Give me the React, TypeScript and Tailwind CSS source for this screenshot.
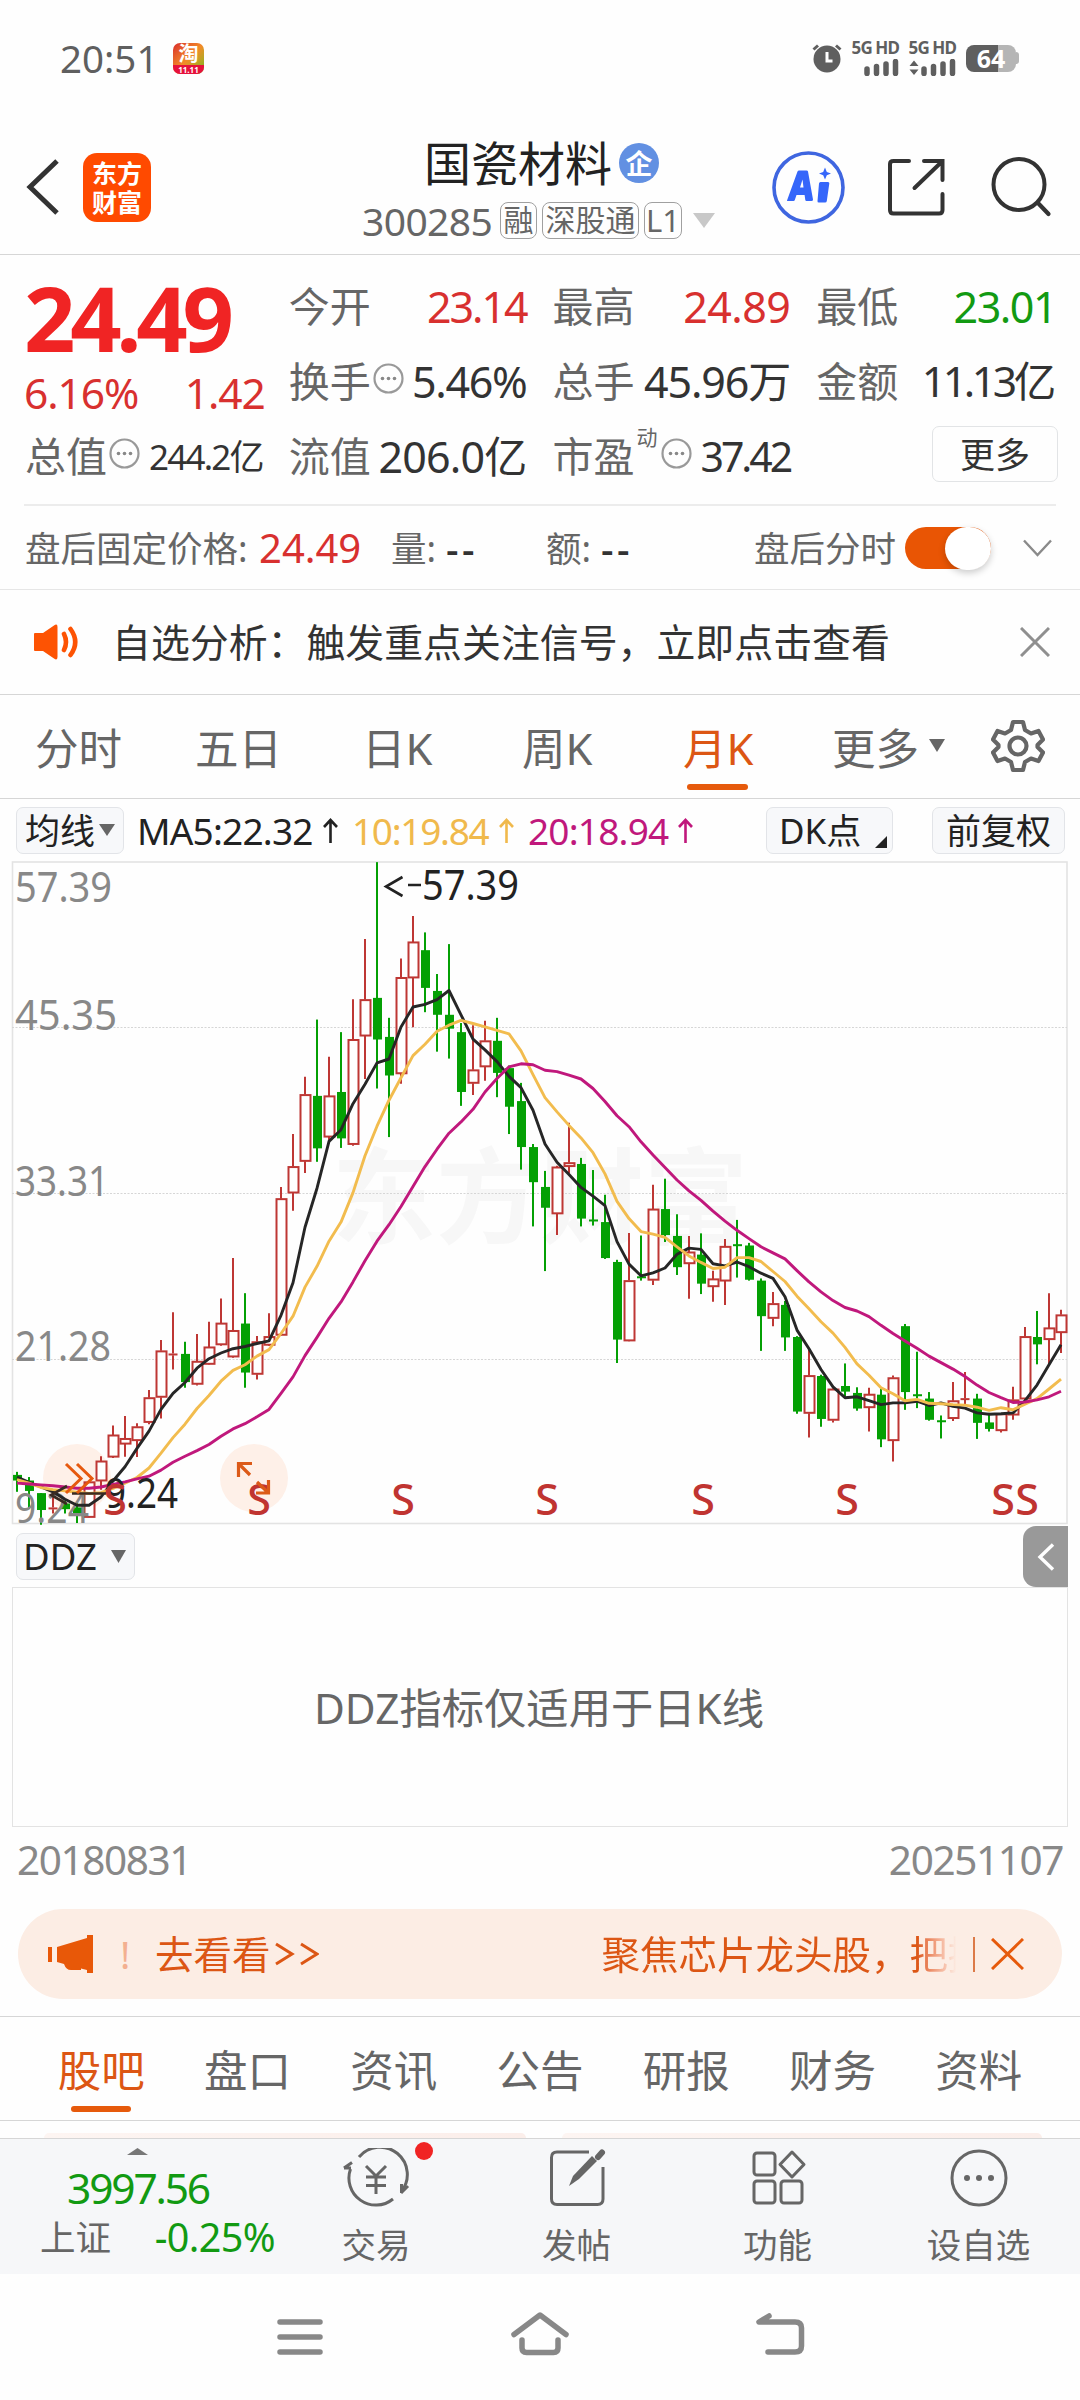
import React from "react";

const FONT = "font-['Noto_Sans','Noto_Sans_CJK_SC',sans-serif]";

type Candle = ["r" | "g", number, number, number, number];

// [direction, high, body top, body bottom, low] in plot units, top to bottom
const CANDLES: Candle[] = [
  ["g", 1434, 1441, 1454, 1480], ["g", 1446, 1454, 1478, 1520], ["g", 1483, 1483, 1522, 1556], ["r", 1490, 1516, 1520, 1530],
  ["g", 1500, 1507, 1520, 1530], ["g", 1505, 1516, 1535, 1552], ["r", 1455, 1457, 1539, 1540], ["r", 1398, 1409, 1455, 1475],
  ["r", 1327, 1349, 1400, 1402], ["r", 1305, 1357, 1370, 1399], ["r", 1322, 1330, 1362, 1400], ["r", 1245, 1263, 1320, 1324],
  ["r", 1130, 1155, 1262, 1311], ["r", 1066, 1161, 1165, 1198], ["g", 1134, 1162, 1227, 1240], ["r", 1116, 1179, 1232, 1235],
  ["r", 1088, 1146, 1186, 1187], ["r", 1034, 1091, 1141, 1143], ["r", 941, 1108, 1169, 1171], ["g", 1022, 1092, 1205, 1240],
  ["r", 1121, 1134, 1209, 1221], ["r", 1068, 1122, 1142, 1144], ["r", 777, 804, 1119, 1120], ["r", 655, 730, 791, 832],
  ["r", 523, 564, 718, 745], ["g", 391, 567, 688, 719], ["r", 477, 567, 662, 670], ["g", 420, 558, 665, 687],
  ["r", 344, 437, 679, 682], ["r", 205, 345, 429, 528], ["g", 28, 341, 437, 550], ["g", 387, 431, 520, 662],
  ["r", 250, 294, 516, 539], ["r", 152, 212, 295, 409], ["g", 190, 231, 318, 374], ["g", 286, 325, 380, 465],
  ["g", 217, 380, 412, 481], ["g", 399, 420, 558, 590], ["r", 404, 507, 538, 565], ["r", 394, 440, 500, 532],
  ["g", 387, 440, 514, 570], ["g", 497, 503, 592, 655], ["g", 537, 579, 685, 737], ["g", 678, 685, 766, 868],
  ["g", 740, 777, 825, 971], ["r", 728, 731, 839, 888], ["r", 629, 721, 730, 745], ["g", 710, 724, 850, 868],
  ["g", 738, 852, 855, 866], ["g", 795, 858, 941, 943], ["g", 945, 950, 1129, 1183], ["r", 883, 993, 1132, 1133],
  ["g", 889, 983, 986, 993], ["r", 772, 828, 992, 1003], ["g", 758, 828, 888, 904], ["g", 840, 890, 962, 980],
  ["r", 890, 927, 954, 1035], ["g", 884, 933, 1000, 1024], ["r", 970, 989, 1007, 1042], ["r", 897, 914, 994, 1049],
  ["g", 853, 909, 913, 986], ["g", 906, 912, 991, 993], ["g", 988, 993, 1075, 1155], ["r", 1019, 1046, 1080, 1098],
  ["g", 1040, 1049, 1124, 1155], ["g", 1121, 1123, 1295, 1300], ["r", 1150, 1212, 1299, 1355], ["g", 1210, 1213, 1312, 1330],
  ["r", 1241, 1243, 1315, 1320], ["g", 1184, 1236, 1249, 1260], ["g", 1239, 1252, 1288, 1293], ["r", 1240, 1255, 1286, 1341],
  ["g", 1243, 1256, 1359, 1377], ["r", 1212, 1217, 1362, 1410], ["g", 1093, 1098, 1250, 1291], ["g", 1157, 1255, 1259, 1287],
  ["g", 1250, 1265, 1314, 1316], ["g", 1304, 1315, 1319, 1357], ["r", 1227, 1270, 1311, 1317], ["r", 1204, 1264, 1268, 1280],
  ["g", 1254, 1265, 1321, 1358], ["g", 1298, 1320, 1335, 1341], ["r", 1298, 1300, 1339, 1343], ["r", 1238, 1268, 1303, 1314],
  ["r", 1100, 1122, 1266, 1270], ["g", 1063, 1123, 1140, 1186], ["r", 1022, 1102, 1129, 1185], ["r", 1060, 1072, 1113, 1160],
];

const MA5 = [
  1446, 1458, 1469, 1480, 1497, 1511, 1511, 1492, 1455, 1422, 1380, 1340, 1290, 1253, 1228, 1195, 1173, 1160, 1150, 1145, 1138, 1132,
  1073, 998, 870, 780, 672, 645, 585, 540, 491, 482, 408, 362, 356, 345, 324, 380, 436, 461, 488, 522, 548, 600, 678, 720, 748, 778,
  798, 820, 903, 955, 982, 975, 964, 932, 918, 921, 954, 959, 950, 961, 976, 988, 1030, 1107, 1150, 1198, 1238, 1263, 1261, 1270,
  1279, 1275, 1275, 1271, 1281, 1275, 1283, 1287, 1298, 1301, 1300, 1298, 1270, 1234, 1187, 1141,
];
const MA10 = [
  1452, 1460, 1470, 1475, 1478, 1481, 1484, 1482, 1472, 1460, 1447, 1425, 1391, 1355, 1324, 1288, 1258, 1225, 1200, 1187, 1167, 1152,
  1115, 1075, 1008, 960, 902, 858, 790, 705, 637, 577, 525, 474, 448, 418, 404, 393, 400, 408, 416, 424, 463, 518, 571, 604, 635, 664,
  698, 747, 810, 850, 880, 886, 893, 915, 936, 951, 965, 962, 940, 940, 949, 972, 995, 1029, 1058, 1088, 1114, 1147, 1185, 1211, 1240,
  1254, 1270, 1267, 1276, 1277, 1279, 1280, 1285, 1292, 1286, 1291, 1278, 1265, 1243, 1220,
];
const MA20 = [
  1460, 1462, 1464, 1466, 1469, 1472, 1472, 1469, 1463, 1457, 1450, 1444, 1430, 1412, 1398, 1385, 1371, 1352, 1335, 1323, 1307, 1290,
  1253, 1215, 1166, 1124, 1080, 1042, 996, 947, 902, 864, 822, 776, 730, 690, 653, 627, 598, 558, 527, 500, 493, 495, 508, 511, 519,
  528, 550, 580, 613, 638, 673, 703, 732, 761, 786, 808, 833, 856, 877, 896, 915, 929, 943, 970, 996, 1019, 1039, 1055, 1063, 1076,
  1096, 1115, 1132, 1149, 1167, 1182, 1197, 1214, 1234, 1251, 1263, 1274, 1273, 1268, 1261, 1248,
];

const cx = (i: number) => 17 + i * 12;
const cy = (v: number) => 850 + v / 2.306;
const points = (s: number[]) => s.map((v, i) => `${cx(i)},${cy(v).toFixed(1)}`).join(" ");

function Stick({ c, i }: { c: Candle; i: number }) {
  const [dir, hi, top, bot, lo] = c;
  const x = cx(i);
  const h = cy(bot) - cy(top);
  if (dir === "g") {
    return (
      <g fill="#04a004">
        <rect x={x - 1} y={cy(hi)} width={2} height={cy(lo) - cy(hi)} />
        <rect x={x - 4} y={cy(top)} width={9} height={Math.max(h, 2)} />
      </g>
    );
  }
  return (
    <g fill="none" stroke="#be3734" strokeWidth={2}>
      <path d={`M${x} ${cy(hi)}V${cy(top)}M${x} ${cy(bot)}V${cy(lo)}`} />
      {h < 3 ? <path d={`M${x - 4.5} ${cy(top) + 1}h9`} /> : <rect x={x - 4.5} y={cy(top) + 0.5} width={10} height={h - 1} fill="#fff" />}
    </g>
  );
}

const AXIS: [string, number, number][] = [["57.39", 902, 97], ["45.35", 1030, 102], ["33.31", 1196, 94], ["21.28", 1361, 96], ["9.24", 1523, 74]];
const SELLS = [115, 259, 403, 547, 703, 847, 1003, 1027];

function KChart() {
  return (
    <svg className="block ml-[12px] w-[1056px] h-[663px] overflow-visible" viewBox="12 861 1056 663" fontFamily="Noto Sans, Noto Sans CJK SC, sans-serif">
      <text x="332" y="1236" fontSize="104" fontWeight="700" fill="#f7f7f7">东方财富</text>
      <rect x="12.5" y="862" width="1054.5" height="661.5" fill="none" stroke="#e3e3e3" strokeWidth="1.6" />
      <path d="M12 1027.5H1067M12 1193.5H1067M12 1359.5H1067" stroke="#d6d6d6" strokeWidth="1" strokeDasharray="2 1.5" />
      <circle cx="77" cy="1478" r="34" fill="#fef0e8" />
      <circle cx="254" cy="1478" r="34" fill="#fef0e8" />
      {CANDLES.map((c, i) => <Stick key={i} c={c} i={i} />)}
      {AXIS.map(([t, y, w]) => (
        <text key={t} x="15" y={y} fontSize="41" fill="#888" textLength={w} lengthAdjust="spacingAndGlyphs">{t}</text>
      ))}
      <polyline points={points(MA5)} fill="none" stroke="#262626" strokeWidth="2.9" strokeLinejoin="round" />
      <polyline points={points(MA10)} fill="none" stroke="#f2bc4e" strokeWidth="2.9" strokeLinejoin="round" />
      <polyline points={points(MA20)} fill="none" stroke="#c0187c" strokeWidth="2.9" strokeLinejoin="round" />
      <text x="422" y="899.5" fontSize="41" fill="#222" textLength="97" lengthAdjust="spacingAndGlyphs">57.39</text>
      <path d="M402.500 877L386 886.500L402.500 896M408 885H421" fill="none" stroke="#222" strokeWidth="2.6" />
      <text x="105" y="1508" fontSize="41" fill="#222" textLength="73" lengthAdjust="spacingAndGlyphs">9.24</text>
      <path d="M67 1486L51 1495L67 1504M72 1493.500H106" fill="none" stroke="#3a2a22" strokeWidth="2.6" />
      {SELLS.map((x) => (
        <text key={x} x={x} y="1515" fontSize="43" fontWeight="500" fill="#c03431" textAnchor="middle">S</text>
      ))}
      <path d="M66 1464L81 1478.500L66 1493M77 1464L92 1478.500L77 1493" fill="none" stroke="#e6590e" strokeWidth="3" />
      <path d="M238.500 1477V1463.500H252M239 1464L250 1475M268.500 1480V1493H256M268 1492.500L257 1482" fill="none" stroke="#dc5a18" strokeWidth="3.200" />
    </svg>
  );
}

function Dots() {
  return (
    <svg className="w-[31px] h-[31px] shrink-0" viewBox="0 0 31 31">
      <circle cx="15.500" cy="15.500" r="14" fill="none" stroke="#999" strokeWidth="2.200" />
      <circle cx="9.500" cy="15.500" r="1.800" fill="#888" /><circle cx="15.500" cy="15.500" r="1.800" fill="#888" /><circle cx="21.500" cy="15.500" r="1.800" fill="#888" />
    </svg>
  );
}

function Down({ className }: { className: string }) {
  return (
    <svg className={className} viewBox="0 0 10 10" preserveAspectRatio="none"><path d="M0 0H10L5 10Z" fill="currentColor" /></svg>
  );
}

function Cell({ label, extra, value, cls }: { label: string; extra?: React.ReactNode; value: string; cls: string }) {
  return (
    <div className="flex h-[75px] items-center whitespace-nowrap">
      <span className="text-[41px] text-[#666] -ml-px">{label}</span>
      {extra}
      <span className={`ml-auto ${cls}`}>{value}</span>
    </div>
  );
}

function StatusBar() {
  return (
    <div className="flex h-[116px] items-center pl-[60px] pr-[60px] text-[#5f5f5f]">
      <span className="w-[113px] text-[38.500px]">20:51</span>
      <div className="flex h-[31px] w-[31px] flex-col overflow-hidden rounded-[7px] bg-gradient-to-br from-[#d8232a] via-[#f28a28] to-[#54b81e]">
        <span className="h-[22px] text-center text-[20px] font-bold leading-[22px] text-white">淘</span>
        <span className="h-[9px] bg-[#e6123c] text-center text-[8px] font-bold leading-[9px] text-white">11.11</span>
      </div>
      <svg className="ml-auto h-[30px] w-[30px]" viewBox="0 0 30 30">
        <circle cx="15" cy="16" r="13.500" fill="#5f5f5f" />
        <path d="M1.500 6.500L6 2.500M28.500 6.500L24 2.500" stroke="#5f5f5f" strokeWidth="3" />
        <path d="M15 9V18H20.500" stroke="#fff" strokeWidth="3" fill="none" />
      </svg>
      {[0, 1].map((k) => (
        <div key={k} className="ml-[8px] flex h-[36px] w-[49px] flex-col items-end justify-between">
          <span className="text-[17px] font-bold leading-[15px] tracking-[-0.9px] whitespace-nowrap">5G HD</span>
          <svg className="h-[17px] w-[47px]" viewBox="0 0 47 17">
            {k === 1 && <path d="M0.500 7L5 1.500L9.500 7ZM0.500 10.500L5 16L9.500 10.500Z" fill="#5f5f5f" />}
            <path d="M15 10V14.500M24.500 7.500V14.500M34 5V14.500M43.500 2.500V14.500" stroke="#5f5f5f" strokeWidth="5.500" strokeLinecap="round" />
          </svg>
        </div>
      ))}
      <div className="ml-[10px] flex h-[27px] w-[54px] items-center">
        <div className="flex h-[27px] w-[50px] items-center justify-center rounded-[8px] bg-linear-to-r from-[#5f5f5f] from-64% to-[#b5b5b5] to-64% text-[25px] font-bold text-white">64</div>
        <div className="h-[12px] w-[3px] rounded-r-[3px] bg-[#b5b5b5]" />
      </div>
    </div>
  );
}

function Header() {
  return (
    <div className="flex h-[139px] items-start border-b-[1.5px] border-[#d6d6d6]">
      <svg className="ml-[26px] mt-[43px] h-[56px] w-[34px]" viewBox="0 0 34 56"><path d="M31 2L4 28L31 54" fill="none" stroke="#333" strokeWidth="5" /></svg>
      <div className="ml-[23px] mt-[37px] flex h-[69px] w-[68px] flex-col items-center justify-center rounded-[14px] bg-[#ff4a00] text-[25px] font-bold leading-[29px] text-white">
        <span>东方</span>
        <span>财富</span>
      </div>
      <div className="ml-[212px] flex w-[354px] flex-col">
        <div className="flex h-[70px] items-end pl-[61px]">
          <span className="text-[47px] leading-[46px] text-[#222]">国瓷材料</span>
          <span className="mb-[3px] ml-[7px] flex h-[40px] w-[40px] items-center justify-center rounded-full bg-[#6290e2] text-[27px] font-bold text-white">企</span>
        </div>
        <div className="-ml-px mt-[15px] flex h-[38px] items-center text-[#666]">
          <span className="w-[138px] text-[39px] tracking-[-0.6px]">300285</span>
          <span className="flex h-[37px] w-[37px] items-center justify-center rounded-[8px] border-[1.5px] border-[#a0a0a0] text-[30px]">融</span>
          <span className="ml-[5px] flex h-[37px] w-[97px] items-center justify-center rounded-[8px] border-[1.5px] border-[#a0a0a0] text-[30px]">深股通</span>
          <span className="ml-[5px] flex h-[37px] w-[38px] items-center justify-center rounded-[8px] border-[1.5px] border-[#a0a0a0] text-[31px]">L1</span>
          <Down className="ml-[11px] h-[15px] w-[22px] text-[#c8c8c8]" />
        </div>
      </div>
      <svg className="ml-[55px] mt-[35px] h-[73px] w-[73px]" viewBox="0 0 73 73">
        <circle cx="36.500" cy="36.500" r="34.500" fill="none" stroke="#3f66e0" strokeWidth="3.600" />
        <path fillRule="evenodd" d="M15 49.500L25.500 20.500Q26 19.500 27 19.500H34.500Q35.800 19.500 36 20.500L41 48.500Q41 50 39.500 50H34.500Q33.500 50 33.300 49L32.600 44H24.500L22.800 49Q22.500 50 21.500 50H16Q14.800 50 15 49.500ZM28 36.500H31.500L30.500 28.500Z" fill="#3566fa" />
        <path d="M48.500 31H56Q57.500 31 57.300 32.500L54.800 50Q54.600 51.500 53 51.500H46.800Q45.300 51.500 45.500 50L47 32.500Q47.200 31 48.500 31Z" fill="#3566fa" />
        <path d="M53 16.500L54.800 21L59 22.500L54.800 24.200L53 28.500L51.200 24.200L47 22.500L51.200 21Z" fill="#3566fa" />
      </svg>
      <svg className="ml-[42px] mt-[41px] h-[62px] w-[60px]" viewBox="0 0 60 62">
        <path d="M22 4H6.500Q3 4 3 7V53Q3 56.500 6.500 56.500H52Q55.500 56.500 55.500 53V37M37 4H55.500V23M54 5.500L27.500 31" fill="none" stroke="#333" strokeWidth="4" strokeLinecap="round" />
      </svg>
      <svg className="ml-[43px] mt-[39px] h-[64px] w-[64px]" viewBox="0 0 64 64">
        <circle cx="29" cy="29.500" r="25.500" fill="none" stroke="#333" strokeWidth="4" />
        <path d="M48 48L58.500 59" stroke="#333" strokeWidth="4.200" strokeLinecap="round" />
      </svg>
    </div>
  );
}

function Quote() {
  const dark = "text-[43px] text-[#333]";
  return (
    <div className="pt-[14px]">
      <div className="grid grid-cols-4 gap-x-[27px] px-[26px]">
        <div>
          <div className="-ml-[2px] flex h-[96px] items-center text-[90px] font-bold tracking-[-5.3px] text-[#f02424]">24.49</div>
          <div className="-ml-[2px] -mr-[2px] flex h-[54px] items-center justify-between pt-[3px] text-[42.500px] tracking-[-1.100px] text-[#d8302f]"><span>6.16%</span><span>1.42</span></div>
          <Cell label="总值" extra={<span className="ml-[2px] -mt-[6px]"><Dots /></span>} value="244.2亿" cls="text-[35px] text-[#333] tracking-[-1.8px]" />
        </div>
        <div>
          <Cell label="今开" value="23.14" cls="text-[43px] text-[#d8302f] tracking-[-2.1px]" />
          <Cell label="换手" extra={<span className="ml-[2px] -mt-[6px]"><Dots /></span>} value="5.46%" cls={`${dark} tracking-[-1.3px]`} />
          <Cell label="流值" value="206.0亿" cls={`${dark} tracking-[-0.800px]`} />
        </div>
        <div>
          <Cell label="最高" value="24.89" cls="text-[43px] text-[#d8302f] tracking-[-0.6px]" />
          <Cell label="总手" value="45.96万" cls={`${dark} tracking-[-1.100px]`} />
          <Cell label="市盈" extra={<><span className="ml-[2px] -mt-[38px] text-[21px] text-[#666]">动</span><span className="ml-[3px] -mt-[6px]"><Dots /></span></>} value="37.42" cls="text-[41px] text-[#333] tracking-[-3px]" />
        </div>
        <div>
          <Cell label="最低" value="23.01" cls="-mr-[2px] text-[43px] text-[#129a12] tracking-[-1.5px]" />
          <Cell label="金额" value="11.13亿" cls="mr-[1px] text-[42.500px] text-[#333] tracking-[-3.3px]" />
          <div className="ml-auto -mr-[4px] mt-[7px] flex h-[56px] w-[126px] items-center justify-center rounded-[7px] border-[1.5px] border-[#e2e4e6] text-[35px] text-[#333]">更多</div>
        </div>
      </div>
      <div className="mx-[24px] mt-[10px] h-[1.5px] bg-[#ececec]" />
      <div className="flex h-[84.500px] items-center border-b-[1.5px] border-[#e6e6e6] pl-[25px] pt-[2px] text-[35.500px] text-[#666]">
        <span className="w-[234px]">盘后固定价格:</span>
        <span className="w-[132px] text-[40px] text-[#d8302f]">24.49</span>
        <span className="w-[55px]">量:</span>
        <span className="w-[100px] text-[39px] font-medium tracking-[3.500px] text-[#333]">--</span>
        <span className="w-[55px]">额:</span>
        <span className="w-[153px] text-[39px] font-medium tracking-[3.500px] text-[#333]">--</span>
        <span>盘后分时</span>
        <div className="ml-[9px] flex h-[42px] w-[86px] items-center justify-end rounded-full bg-[#e95504]">
          <div className="h-[43px] w-[46px] rounded-full bg-white shadow-[0_3px_7px_rgba(0,0,0,0.2)]" />
        </div>
        <svg className="ml-[31px] h-[18px] w-[31px]" viewBox="0 0 31 18"><path d="M2 1.500L15.500 16L29 1.500" fill="none" stroke="#8a8a8a" strokeWidth="2.400" /></svg>
      </div>
    </div>
  );
}

function Notice() {
  return (
    <div className="flex h-[105px] items-center border-b-[1.5px] border-[#d6d6d6] pl-[34px]">
      <svg className="h-[36px] w-[45px]" viewBox="0 0 45 36">
        <path d="M1 9H9L20 1.500Q23.500 -1 23.500 3V33Q23.500 37 20 34.500L9 27H1Q0 27 0 26V10Q0 9 1 9Z" fill="#fd5303" />
        <path d="M30 10Q34 18 30 26M36.500 5Q46 18 36.500 31" fill="none" stroke="#fd5303" strokeWidth="4.600" strokeLinecap="round" />
      </svg>
      <span className="ml-[33px] whitespace-nowrap text-[38.900px] text-[#333]">自选分析：触发重点关注信号，立即点击查看</span>
      <svg className="ml-auto mr-[30px] h-[30px] w-[30px]" viewBox="0 0 30 30"><path d="M1 1L29 29M29 1L1 29" stroke="#8f8f8f" strokeWidth="3" /></svg>
    </div>
  );
}

function PeriodTabs() {
  return (
    <div className="flex h-[104px] items-center border-b-[1.5px] border-[#d6d6d6] pt-[4px] text-[43.500px] text-[#666]">
      <span className="ml-[35px] w-[160px]">分时</span>
      <span className="w-[167px]">五日</span>
      <span className="w-[160px]">日K</span>
      <span className="w-[161px]">周K</span>
      <div className="relative w-[149px] text-[#dc5614]">
        月K
        <div className="absolute left-[4px] top-[57px] h-[6px] w-[61px] rounded-full bg-[#e65a0c]" />
      </div>
      <span>更多</span>
      <Down className="-mt-[6px] ml-[10px] h-[13px] w-[16px] text-[#666]" />
      <svg className="-mt-[5px] ml-[46px] h-[54px] w-[54px]" viewBox="0 0 54 54" fill="none" stroke="#666" strokeWidth="4.200" strokeLinejoin="round">
        <path d="M22 3H32L34 11L40 14.500L47.500 12L52 20.500L46.500 26V28L52 33.500L47.500 42L40 39.500L34 43L32 51H22L20 43L14 39.500L6.500 42L2 33.500L7.500 28V26L2 20.500L6.500 12L14 14.500L20 11Z" />
        <circle cx="27" cy="27" r="8.500" />
      </svg>
    </div>
  );
}

const chip = "flex h-[47px] items-center rounded-[7px] border-[1.5px] border-[#e2e4e8] bg-[#f7f8fa] text-[35px] text-[#222]";

function Up() {
  return <svg className="h-[25px] w-[15px]" viewBox="0 0 15 25"><path d="M7.500 25V2M1 9L7.500 2L14 9" fill="none" stroke="currentColor" strokeWidth="2.600" /></svg>;
}

function Legend() {
  return (
    <div className="flex h-[62px] items-center pl-[16px] text-[37px] whitespace-nowrap">
      <div className={`${chip} w-[108px] pl-[8px]`}>均线<Down className="ml-[4px] h-[12px] w-[16px] text-[#666]" /></div>
      <div className="ml-[13px] flex w-[215px] items-center text-[#222]"><span className="w-[186px] tracking-[-0.8px]">MA5:22.32</span><Up /></div>
      <div className="flex w-[176px] items-center text-[#f0b94c]"><span className="w-[147px] tracking-[-1.300px]">10:19.84</span><Up /></div>
      <div className="flex w-[238px] items-center text-[#c0187c]"><span className="w-[150px] tracking-[-0.8px]">20:18.94</span><Up /></div>
      <div className={`${chip} relative w-[127px] pl-[12px]`}>
        DK点
        <svg className="absolute bottom-[5px] right-[5px] h-[12px] w-[12px]" viewBox="0 0 12 12"><path d="M12 0V12H0Z" fill="#222" /></svg>
      </div>
      <div className={`${chip} ml-[39px] w-[133px] justify-center`}>前复权</div>
    </div>
  );
}

function Indicator() {
  return (
    <div>
      <div className="flex h-[63px] items-center pl-[16px] pt-[2px]">
        <div className={`${chip} w-[119px] pl-[6px]`}><span className="text-[36.500px]">DDZ</span><Down className="ml-auto mr-[8px] h-[13px] w-[15px] text-[#666]" /></div>
        <div className="ml-auto mr-[12px] flex h-[61px] w-[45px] items-center justify-center rounded-l-[13px] bg-[#999]">
          <svg className="h-[28px] w-[18px]" viewBox="0 0 18 28"><path d="M16 1.500L3 14L16 26.500" fill="none" stroke="#fff" strokeWidth="3.400" /></svg>
        </div>
      </div>
      <div className="mx-[12px] flex h-[240px] items-center justify-center border-[1.8px] border-[#e3e3e3] pr-[2px] pt-[2px] text-[42.300px] text-[#666]">DDZ指标仅适用于日K线</div>
      <div className="flex h-[66px] items-center justify-between pl-[17px] pr-[17px] text-[40.500px] tracking-[-1.400px] text-[#888]"><span>20180831</span><span>20251107</span></div>
    </div>
  );
}

function Banner() {
  return (
    <div className="mx-[18px] mt-[16px] flex h-[90px] items-center rounded-full bg-[#fcede4] pl-[30px] text-[38.500px] text-[#dc5614]">
      <svg className="h-[40px] w-[46px]" viewBox="0 0 46 40">
        <path d="M0 13H4V28H0ZM9 13L39 4V1H45V39H39V36L33 34.500V36H23Q18 36 16 30L9 28Z" fill="#e85808" />
      </svg>
      <span className="ml-[26px] w-[35px] text-[#f3b090]">!</span>
      <span className="whitespace-nowrap">去看看</span>
      <svg className="ml-[4px] h-[24px] w-[44px]" viewBox="0 0 44 24"><path d="M1 2L17 12L1 22M26 2L42 12L26 22" fill="none" stroke="#dc5614" strokeWidth="3" /></svg>
      <span className="ml-[283px] w-[358px] overflow-hidden whitespace-nowrap bg-linear-to-r from-[#dc5614] from-88% to-[#fcede4] to-99% bg-clip-text py-[4px] text-transparent">聚焦芯片龙头股，把握</span>
      <div className="ml-[13px] h-[35px] w-[2px] bg-[#dc7a48]" />
      <svg className="ml-[16px] h-[32px] w-[33px]" viewBox="0 0 33 32"><path d="M1 1L32 31M32 1L1 31" stroke="#e65a0c" strokeWidth="3" /></svg>
    </div>
  );
}

function SectionTabs() {
  return (
    <div className="mt-[17px] border-y-[1.5px] border-[#d6d6d6]">
      <div className="grid h-[103px] grid-cols-7 items-center pl-[28px] pr-[28px] pt-[4px] text-center text-[43.500px] text-[#666]">
        {["股吧", "盘口", "资讯", "公告", "研报", "财务", "资料"].map((t, i) => (
          <div key={t} className={i === 0 ? "relative text-[#dc5614]" : ""}>
            {t}
            {i === 0 && <div className="absolute left-[43px] top-[57px] h-[6px] w-[60px] rounded-full bg-[#e65a0c]" />}
          </div>
        ))}
      </div>
    </div>
  );
}

function BottomBar() {
  const item = "flex flex-col items-center text-[34.500px] text-[#666]";
  return (
    <div className="flex h-[136px] border-t-[1.5px] border-[#d6d6d6] bg-[#f6f7f9]">
      <div className="w-[275px] shrink-0">
        <svg className="ml-[127px] mt-[9px] block h-[7px] w-[21px]" viewBox="0 0 21 7"><path d="M0 7L10.500 0L21 7Z" fill="#777" /></svg>
        <div className="mt-[11px] flex h-[44px] items-center justify-center pl-[1px] text-[42.500px] tracking-[-2.200px] text-[#129a12]">3997.56</div>
        <div className="mt-[6px] flex h-[44px] items-center justify-between pl-[40px] text-[35.500px] text-[#666]">上证<span className="text-[39.500px] tracking-[-0.6px] text-[#129a12]">-0.25%</span></div>
      </div>
      <div className={`${item} relative ml-px w-[200px]`}>
        <svg className="mt-[9px] h-[60px] w-[68px]" viewBox="0 0 68 60" fill="none" stroke="#666" strokeWidth="3">
          <path d="M17 9A27 27 0 0 1 59 44M51 51A27 27 0 0 1 8.500 21" />
          <path d="M59 45L66 38M9 20L2 20M2 20L10 14.500M59.500 45V36" />
          <path d="M24 18L34 28L44 18M34 28V46M24 29H44M24 37.500H44" />
        </svg>
        <div className="absolute left-[139px] top-[3px] h-[18px] w-[18px] rounded-full bg-[#f02424]" />
        <span className="mt-[20px]">交易</span>
      </div>
      <div className={`${item} w-[201px]`}>
        <svg className="mt-[9px] h-[60px] w-[60px]" viewBox="0 0 60 60" fill="none" stroke="#666" strokeWidth="3">
          <path d="M42 4H10Q4.500 4 4.500 9.500V51Q4.500 56.500 10 56.500H50.500Q56 56.500 56 51V19" />
          <path d="M22 38L26 28L45 8L50 13L32 31Z" fill="#666" stroke="none" /><path d="M51 9L55 4.500" strokeWidth="6" strokeLinecap="round" />
        </svg>
        <span className="mt-[20px]">发帖</span>
      </div>
      <div className={`${item} w-[201px]`}>
        <svg className="mt-[9px] h-[60px] w-[60px]" viewBox="0 0 60 60" fill="none" stroke="#666" strokeWidth="3" strokeLinejoin="round">
          <rect x="6" y="5" width="21" height="22" rx="3" /><rect x="6" y="33" width="21" height="22" rx="3" /><rect x="33" y="33" width="21" height="22" rx="3" />
          <path d="M44 4L56 16.500L44 29L32 16.500Z" />
        </svg>
        <span className="mt-[20px]">功能</span>
      </div>
      <div className={`${item} w-[201px]`}>
        <svg className="mt-[9px] h-[60px] w-[60px]" viewBox="0 0 60 60">
          <circle cx="30" cy="30" r="27" fill="none" stroke="#666" strokeWidth="3" />
          <circle cx="18" cy="30" r="3" fill="#666" /><circle cx="30" cy="30" r="3" fill="#666" /><circle cx="42" cy="30" r="3" fill="#666" />
        </svg>
        <span className="mt-[20px]">设自选</span>
      </div>
    </div>
  );
}

function SystemNav() {
  return (
    <div className="flex h-[126px] items-start pt-[36px]">
      <svg className="ml-[270px] h-[50px] w-[60px]" viewBox="0 0 60 50"><path d="M10 12H50M10 27H50M10 42H50" stroke="#888" strokeWidth="5.500" strokeLinecap="round" /></svg>
      <svg className="ml-[180px] h-[50px] w-[60px]" viewBox="0 0 60 50"><path d="M4 24.500L30 5L56 24.500M12 30V38Q12 42.500 16.500 42.500H43.500Q48 42.500 48 38V30" fill="none" stroke="#888" strokeWidth="5.500" strokeLinecap="round" strokeLinejoin="round" /></svg>
      <svg className="ml-[181px] h-[50px] w-[60px]" viewBox="0 0 60 50"><path d="M18 6L8 12H44Q50.500 12 50.500 18V36Q50.500 42 44 42H17" fill="none" stroke="#888" strokeWidth="5.500" strokeLinecap="round" strokeLinejoin="round" /></svg>
    </div>
  );
}

export default function App() {
  return (
    <div className={`h-[2400px] w-[1080px] overflow-hidden bg-[#fefefe] leading-none ${FONT}`}>
      <StatusBar />
      <Header />
      <Quote />
      <Notice />
      <PeriodTabs />
      <Legend />
      <KChart />
      <Indicator />
      <Banner />
      <SectionTabs />
      <div className="flex h-[17px] gap-[36px] pl-[44px] pt-[12px]">
        <div className="h-[5px] w-[482px] rounded-t-[8px] bg-linear-to-r from-[#fdf5f2] to-[#fbeeea]" />
        <div className="h-[5px] w-[480px] rounded-t-[8px] bg-linear-to-r from-[#fdf5f2] to-[#fbeeea]" />
      </div>
      <BottomBar />
      <SystemNav />
    </div>
  );
}
